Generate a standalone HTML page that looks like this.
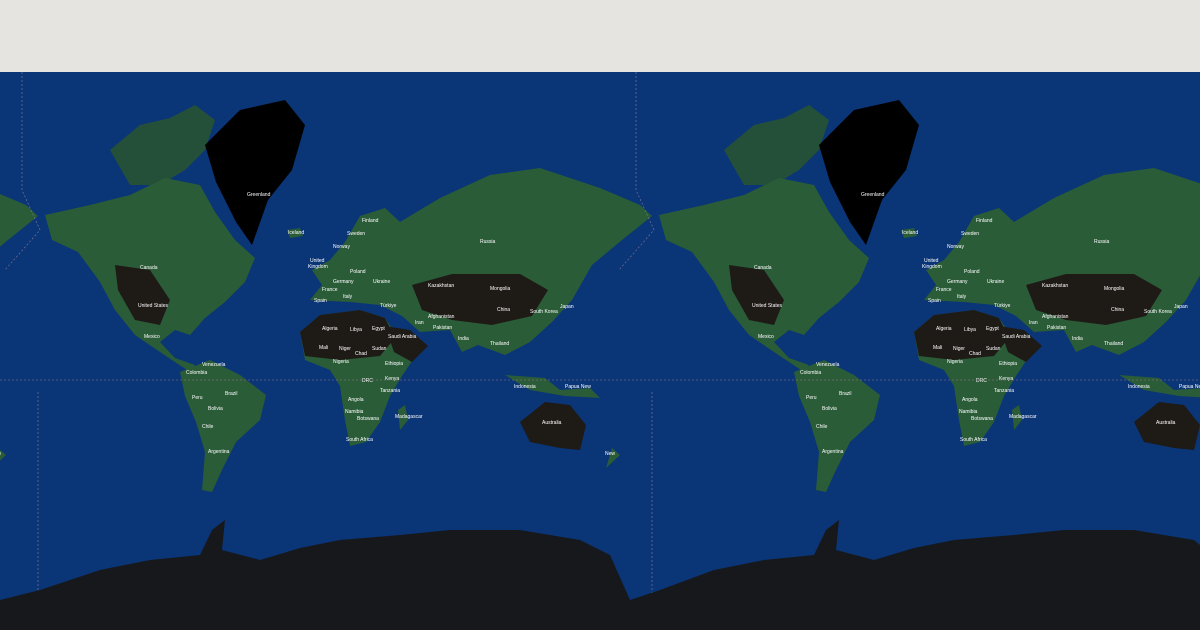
<!DOCTYPE html>
<html><head><meta charset="utf-8"><style>
body{margin:0;width:1200px;height:630px;overflow:hidden;background:#e5e4e1}
svg{position:absolute;left:0;top:0}
text{font-family:"Liberation Sans",sans-serif;font-size:5px;fill:#fff}
</style></head><body>
<svg width="1200" height="630" viewBox="0 0 1200 630">
<rect x="0" y="0" width="1200" height="72" fill="#e5e4e1"/>
<rect x="0" y="72" width="1200" height="558" fill="#0a3577"/>
<defs>
<g id="w">
<path d="M110,150 L140,125 L170,118 L195,105 L215,120 L205,150 L185,170 L160,185 L130,185 Z" fill="#24503a"/>
<path d="M45,215 L90,205 L130,195 L165,178 L200,185 L215,212 L235,240 L255,258 L245,282 L225,302 L205,318 L190,335 L175,330 L160,342 L175,358 L195,365 L190,372 L160,352 L135,335 L115,310 L100,282 L78,252 L52,240 Z" fill="#2a5c38"/>
<path d="M115,265 L150,270 L170,300 L160,325 L135,320 L118,290 Z" fill="#1e1a16"/>
<path d="M205,145 L240,110 L285,100 L305,125 L292,170 L268,200 L252,245 L236,222 L216,182 Z" fill="#000"/>
<path d="M287,230 L300,228 L303,236 L290,238 Z" fill="#2a5c38"/>
<path d="M180,372 L210,360 L240,375 L266,395 L260,420 L236,442 L222,470 L212,492 L202,490 L205,452 L196,422 L185,396 Z" fill="#2a5c38"/>
<path d="M310,300 L322,285 L312,270 L330,260 L345,242 L360,216 L385,208 L400,222 L440,198 L490,175 L540,168 L600,188 L640,205 L652,216 L622,240 L592,265 L572,300 L552,322 L530,342 L505,355 L478,345 L462,352 L450,330 L420,332 L402,316 L380,305 L350,302 Z" fill="#2a5c38"/>
<path d="M412,285 L452,274 L520,274 L548,290 L532,316 L492,325 L452,320 L422,310 Z" fill="#1e1a16"/>
<path d="M300,332 L320,315 L360,310 L385,318 L400,340 L418,352 L402,376 L390,396 L380,422 L366,442 L350,446 L345,420 L340,386 L330,370 L305,360 Z" fill="#2a5c38"/>
<path d="M300,332 L320,315 L360,310 L385,318 L395,338 L380,356 L340,360 L305,356 Z" fill="#1e1a16"/>
<path d="M385,326 L410,330 L428,346 L412,362 L394,352 Z" fill="#1e1a16"/>
<path d="M398,410 L405,405 L408,420 L400,430 Z" fill="#2a5c38"/>
<path d="M505,375 L545,378 L560,390 L590,388 L600,398 L565,396 L530,390 Z" fill="#2a5c38"/>
<path d="M520,422 L545,402 L570,405 L586,425 L580,450 L560,448 L530,442 Z" fill="#1e1a16"/>
<path d="M612,448 L620,455 L606,468 Z" fill="#2a5c38"/>
<text x="247" y="196">Greenland</text><text x="288" y="234">Iceland</text>
<text x="140" y="269">Canada</text><text x="138" y="307">United States</text><text x="144" y="338">Mexico</text>
<text x="202" y="366">Venezuela</text><text x="186" y="374">Colombia</text><text x="192" y="399">Peru</text>
<text x="225" y="395">Brazil</text><text x="208" y="410">Bolivia</text><text x="202" y="428">Chile</text><text x="208" y="453">Argentina</text>
<text x="480" y="243">Russia</text><text x="428" y="287">Kazakhstan</text><text x="490" y="290">Mongolia</text>
<text x="497" y="311">China</text><text x="530" y="313">South Korea</text><text x="560" y="308">Japan</text>
<text x="428" y="318">Afghanistan</text><text x="415" y="324">Iran</text><text x="433" y="329">Pakistan</text>
<text x="458" y="340">India</text><text x="490" y="345">Thailand</text><text x="514" y="388">Indonesia</text>
<text x="565" y="388">Papua New</text><text x="542" y="424">Australia</text><text x="605" y="455">New</text>
<text x="322" y="330">Algeria</text><text x="350" y="331">Libya</text><text x="372" y="330">Egypt</text>
<text x="319" y="349">Mali</text><text x="339" y="350">Niger</text><text x="355" y="355">Chad</text><text x="372" y="350">Sudan</text>
<text x="333" y="363">Nigeria</text><text x="388" y="338">Saudi Arabia</text><text x="385" y="365">Ethiopia</text>
<text x="362" y="382">DRC</text><text x="385" y="380">Kenya</text><text x="380" y="392">Tanzania</text>
<text x="348" y="401">Angola</text><text x="345" y="413">Namibia</text><text x="357" y="420">Botswana</text>
<text x="346" y="441">South Africa</text><text x="395" y="418">Madagascar</text>
<text x="362" y="222">Finland</text><text x="347" y="235">Sweden</text><text x="333" y="248">Norway</text>
<text x="310" y="262">United</text><text x="308" y="268">Kingdom</text><text x="350" y="273">Poland</text>
<text x="333" y="283">Germany</text><text x="373" y="283">Ukraine</text><text x="322" y="291">France</text>
<text x="343" y="298">Italy</text><text x="314" y="302">Spain</text><text x="380" y="307">Türkiye</text>
<text x="340" y="589" style="font-size:6px;font-style:italic;letter-spacing:1px;fill:#bbb">ANTARCTICA</text>
</g>
</defs>
<use href="#w" x="-614"/><use href="#w"/><use href="#w" x="614"/>
<line x1="0" y1="380" x2="1200" y2="380" stroke="#a0708a" stroke-width="0.6" stroke-dasharray="2,2"/>
<path d="M22,72 L22,190 L40,230 L5,270 M38,392 L38,630 M636,72 L636,190 L654,230 L619,270 M652,392 L652,630" stroke="#8a7a9a" stroke-width="0.6" stroke-dasharray="2,2" fill="none"/>
<path d="M0,600 L40,590 L100,570 L150,560 L200,555 L212,530 L225,520 L222,550 L260,560 L300,548 L340,540 L400,535 L450,530 L520,530 L580,540 L610,555 L630,600 L660,590 L714,570 L764,560 L814,555 L826,530 L839,520 L836,550 L874,560 L914,548 L954,540 L1014,535 L1064,530 L1134,530 L1194,540 L1200,545 L1200,630 L0,630 Z" fill="#17181c"/>
</svg>
</body></html>
